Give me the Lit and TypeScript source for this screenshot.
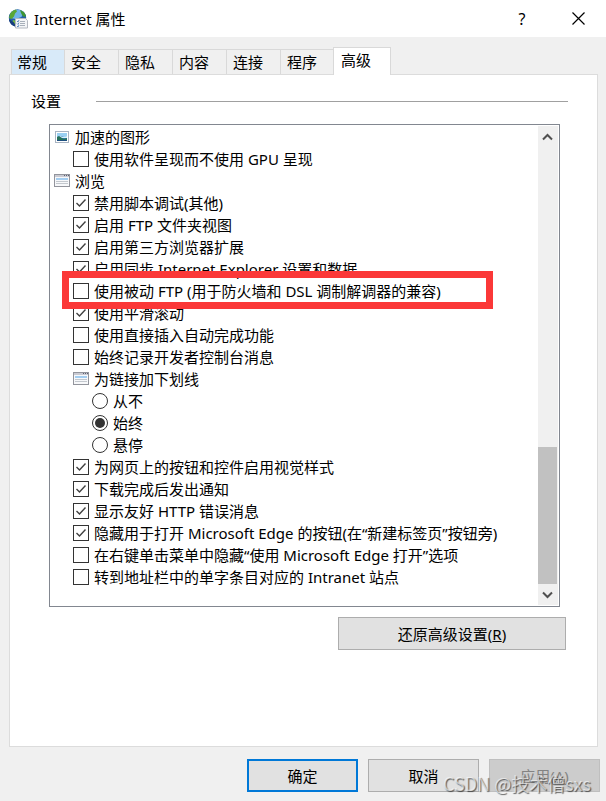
import { LitElement, html, css, svg, nothing } from "lit";
import { customElement, state } from "lit/decorators.js";
import { classMap } from "lit/directives/class-map.js";

type Kind = "image" | "window" | "check" | "radio";

interface Row {
  kind: Kind;
  level: number;
  text: string;
  on?: boolean;
  marked?: boolean;
}

const ROWS: Row[] = [
  { kind: "image", level: 0, text: "加速的图形" },
  { kind: "check", level: 1, text: "使用软件呈现而不使用 GPU 呈现" },
  { kind: "window", level: 0, text: "浏览" },
  { kind: "check", level: 1, text: "禁用脚本调试(其他)", on: true },
  { kind: "check", level: 1, text: "启用 FTP 文件夹视图", on: true },
  { kind: "check", level: 1, text: "启用第三方浏览器扩展", on: true },
  { kind: "check", level: 1, text: "启用同步 Internet Explorer 设置和数据", on: true },
  { kind: "check", level: 1, text: "使用被动 FTP (用于防火墙和 DSL 调制解调器的兼容)", marked: true },
  { kind: "check", level: 1, text: "使用平滑滚动", on: true },
  { kind: "check", level: 1, text: "使用直接插入自动完成功能" },
  { kind: "check", level: 1, text: "始终记录开发者控制台消息" },
  { kind: "window", level: 1, text: "为链接加下划线" },
  { kind: "radio", level: 2, text: "从不" },
  { kind: "radio", level: 2, text: "始终", on: true },
  { kind: "radio", level: 2, text: "悬停" },
  { kind: "check", level: 1, text: "为网页上的按钮和控件启用视觉样式", on: true },
  { kind: "check", level: 1, text: "下载完成后发出通知", on: true },
  { kind: "check", level: 1, text: "显示友好 HTTP 错误消息", on: true },
  { kind: "check", level: 1, text: "隐藏用于打开 Microsoft Edge 的按钮(在“新建标签页”按钮旁)", on: true },
  { kind: "check", level: 1, text: "在右键单击菜单中隐藏“使用 Microsoft Edge 打开”选项" },
  { kind: "check", level: 1, text: "转到地址栏中的单字条目对应的 Intranet 站点" },
];

const TABS = ["常规", "安全", "隐私", "内容", "连接", "程序", "高级"];

@customElement("option-row")
class OptionRow extends LitElement {
  static properties = { row: { attribute: false } };
  declare row: Row;

  static styles = css`
    :host {
      display: block;
      position: relative;
    }
    .row {
      display: flex;
      align-items: center;
      gap: 5px;
      height: 22px;
      padding-left: 4px;
      white-space: nowrap;
    }
    .level1 {
      padding-left: 23px;
    }
    .level2 {
      padding-left: 42px;
    }
    .mark {
      display: grid;
      flex: none;
      width: 16px;
      height: 16px;
    }
    .mark > * {
      grid-area: 1 / 1;
    }
    input {
      appearance: none;
      box-sizing: border-box;
      width: 16px;
      height: 16px;
      margin: 0;
      border: 1px solid #333;
      background: #fff;
    }
    input[type="radio"] {
      border-radius: 50%;
    }
    svg {
      display: block;
      width: 16px;
      height: 16px;
      pointer-events: none;
    }
  `;

  private mark() {
    const r = this.row;
    if (r.kind === "image") {
      return html`<svg viewBox="0 0 16 16" aria-hidden="true">
        <rect x="1.5" y="2.5" width="13" height="11" fill="#fff" stroke="#a9b4c2" />
        <rect x="3" y="4" width="10" height="8" fill="#2e78b8" />
        <path d="M3 4h10v3l-3 1-3-1-4 1z" fill="#9ad0f2" />
        <path d="M4 8l2-1 3 1 4-1v2H4z" fill="#d9f0f8" />
        <path d="M3 8l2-1 3 2 2 1 3-1v3H3z" fill="#26715b" />
        <path d="M3 11h10v1H3z" fill="#1d4f80" />
      </svg>`;
    }
    if (r.kind === "window") {
      return html`<svg viewBox="0 0 16 16" aria-hidden="true">
        <rect x="0.5" y="1.5" width="15" height="12" fill="#f7f8fa" stroke="#92949c" />
        <path d="M1 2h14v2H1z" fill="#c9cad2" />
        <path d="M10 2h1v1h-1zM12 2h1v1h-1zM14 2h1v1h-1z" fill="#5d6070" />
        <path d="M2 5h12v2H2z" fill="#a3cdf0" />
        <path d="M2 8h12v1H2zM2 10h12v1H2z" fill="#c3c8ce" />
      </svg>`;
    }
    const dot = r.kind === "radio"
      ? svg`<circle cx="8" cy="8" r="5" fill="#333" />`
      : svg`<path d="M3.5 8l3 3 6-6.5" fill="none" stroke="#404040" stroke-width="1.4" />`;
    return html`<input id="field" type=${r.kind === "radio" ? "radio" : "checkbox"} .checked=${!!r.on} />
      ${r.on ? html`<svg viewBox="0 0 16 16" aria-hidden="true">${dot}</svg>` : nothing}`;
  }

  private toggle() {
    if (this.row.kind === "check") this.row = { ...this.row, on: !this.row.on };
  }

  render() {
    const r = this.row;
    const control = r.kind === "check" || r.kind === "radio";
    const cls = classMap({ row: true, level1: r.level === 1, level2: r.level === 2 });
    return html`<div class=${cls} @change=${this.toggle}>
      <span class="mark">${this.mark()}</span>
      ${control ? html`<label for="field">${r.text}</label>` : html`<span>${r.text}</span>`}
    </div>`;
  }
}

@customElement("app-root")
class AppRoot extends LitElement {
  @state() active = 6;

  static styles = css`
    :host {
      display: flex;
      flex-direction: column;
      position: relative;
      box-sizing: border-box;
      min-height: 100vh;
      background: #f0f0f0;
      color: #000;
      font: 15px/20px "Noto Sans", "Noto Sans CJK SC", sans-serif;
    }
    button {
      box-sizing: border-box;
      margin: 0;
      padding: 0;
      border: 0;
      background: none;
      color: inherit;
      font: inherit;
    }
    .titlebar {
      display: flex;
      align-items: center;
      height: 37px;
      padding-left: 8px;
      background: #fff;
    }
    .logo {
      width: 21px;
      height: 20px;
      margin-right: 5px;
    }
    .title {
      flex: 1;
      margin: 0;
      font: inherit;
    }
    .caption {
      display: grid;
      place-items: center;
      width: 56px;
      height: 37px;
      font-size: 16px;
    }
    .caption svg {
      width: 13px;
      height: 13px;
    }
    .tabs {
      display: flex;
      align-items: flex-end;
      height: 37px;
      padding-left: 11px;
    }
    .tab {
      width: 54px;
      height: 25px;
      padding-left: 6px;
      border: 1px solid #d9d9d9;
      border-bottom: 0;
      border-left: 0;
      text-align: left;
    }
    .tab:first-child {
      padding-left: 5px;
      border-left: 1px solid #d9d9d9;
      background: #d8eaf9;
    }
    .tab.active {
      z-index: 1;
      width: 58px;
      height: 28px;
      margin: 0 0 -1px -2px;
      padding: 0 0 3px 7px;
      border-left: 1px solid #d9d9d9;
      background: #fff;
    }
    .panel {
      display: flex;
      flex: 1;
      flex-direction: column;
      margin: 0 8px 0 9px;
      padding: 16px 29px 24px 21px;
      border: 1px solid #dcdcdc;
      background: #fff;
    }
    .group {
      display: flex;
      align-items: center;
      gap: 35px;
    }
    .group h2 {
      margin: 0;
      font: inherit;
    }
    .rule {
      flex: 1;
      height: 1px;
      background: #a0a0a0;
    }
    .list {
      display: flex;
      margin: 13px 8px 0 18px;
      padding: 1px;
      border: 1px solid #828790;
    }
    .rows {
      flex: 1;
      min-width: 0;
      margin: 0 0 17px -1px;
    }
    .item {
      position: relative;
    }
    .highlight {
      position: absolute;
      z-index: 2;
      inset: -9px 45px -7px 12px;
      border: 7px solid #fb3838;
      pointer-events: none;
    }
    .scrollbar {
      display: flex;
      flex-direction: column;
      width: 20px;
      background: #f0f0f0;
    }
    .step {
      display: grid;
      place-items: center;
      height: 21px;
    }
    .step svg {
      width: 12px;
      height: 8px;
    }
    .track {
      display: flex;
      flex: 1;
      flex-direction: column;
      justify-content: flex-end;
    }
    .thumb {
      height: 137px;
      margin-right: 1px;
      background: #c1c1c1;
    }
    .push {
      width: 111px;
      height: 33px;
      border: 1px solid #adadad;
      background: #e1e1e1;
    }
    .restore {
      align-self: flex-end;
      width: 228px;
      margin: 10px 2px 0 0;
    }
    .default {
      border: 2px solid #0078d7;
    }
    .push:disabled {
      border-color: #bfbfbf;
      background: #ccc;
      color: #838383;
    }
    .footer {
      display: flex;
      justify-content: flex-end;
      gap: 10px;
      padding: 12px 6px 9px;
    }
    .watermark {
      position: absolute;
      right: 15px;
      bottom: 6px;
      color: rgba(255, 255, 255, 0.6);
      font: 18px/24px "Noto Sans CJK SC", sans-serif;
      text-shadow: 1px 1px 1px rgba(0, 0, 0, 0.6);
      pointer-events: none;
    }
  `;

  private chevron(d: string) {
    return html`<svg viewBox="0 0 12 8" aria-hidden="true">
      <path d=${d} fill="none" stroke="#505050" stroke-width="2" />
    </svg>`;
  }

  render() {
    return html`
      <header class="titlebar">
        <svg class="logo" viewBox="0 0 21 20" aria-hidden="true">
          <circle cx="9.5" cy="9" r="8.7" fill="#2560a8" />
          <path d="M3 3.5C6 .5 12-.5 15.500 3l-2 5-6 2-5-1z" fill="#70b4e8" />
          <path d="M2 5c2-3 4-4 6-4.500l1 2-2 2-1 3-2.500 2.500L1 9z" fill="#5aa735" />
          <path d="M12 1c3 1 5 3 6 6l-2 1-2-2-1-2z" fill="#3f9630" />
          <path d="M5 11l4 1-1 5c-2-.3-3-1-4-2z" fill="#75b840" />
          <path d="M1 10c0 4 3 7 7 7.500l-2-4z" fill="#173e80" />
          <path d="M7.500 9.500h10l2 2v7.500h-12z" fill="#f4f5f7" stroke="#b4b8c0" />
          <path d="M9 12l1 1 1-2M9 14.500l1 1 1-2M9 17l1 1 1-2" fill="none" stroke="#3f75b5" stroke-width=".8" />
          <path d="M12 12.500h5M12 14.500h5M12 16.500h5" stroke="#a8b0ba" />
        </svg>
        <h1 class="title">Internet 属性</h1>
        <button class="caption" aria-label="帮助">?</button>
        <button class="caption" aria-label="关闭">
          <svg viewBox="0 0 13 13"><path d="M.5.5l12 12M12.500.5l-12 12" stroke="#000" stroke-width="1.200" /></svg>
        </button>
      </header>
      <nav class="tabs" role="tablist">
        ${TABS.map(
          (t, i) => html`<button
            role="tab"
            aria-selected=${i === this.active}
            class=${classMap({ tab: true, active: i === this.active })}
            @click=${() => (this.active = i)}
          >${t}</button>`
        )}
      </nav>
      <main class="panel">
        <div class="group">
          <h2>设置</h2>
          <span class="rule"></span>
        </div>
        <div class="list">
          <div class="rows">
            ${ROWS.map(
              (r) => html`<div class="item">
                <option-row .row=${r}></option-row>
                ${r.marked ? html`<span class="highlight"></span>` : nothing}
              </div>`
            )}
          </div>
          <div class="scrollbar">
            <button class="step" aria-label="向上滚动">${this.chevron("M1 6.500l4.500-4.500 4.500 4.500")}</button>
            <div class="track"><div class="thumb"></div></div>
            <button class="step" aria-label="向下滚动">${this.chevron("M1 1.500l4.500 4.500 4.500-4.500")}</button>
          </div>
        </div>
        <button class="push restore">还原高级设置(<u>R</u>)</button>
      </main>
      <footer class="footer">
        <button class="push default">确定</button>
        <button class="push">取消</button>
        <button class="push" disabled>应用(<u>A</u>)</button>
      </footer>
      <div class="watermark">CSDN @技术僧sxs</div>
    `;
  }
}
